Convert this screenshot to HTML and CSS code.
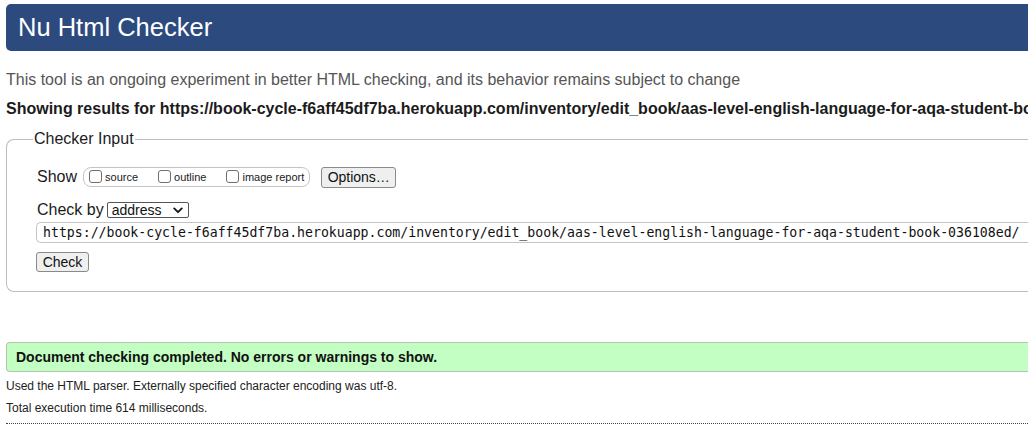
FILE: index.html
```html
<!DOCTYPE html>
<html lang="en">
<head>
<meta charset="utf-8">
<title>Nu Html Checker</title>
<link rel="stylesheet" href="styles.css">
</head>
<body>
<div class="page">
  <h1 class="banner">Nu Html Checker</h1>
  <p class="intro">This tool is an ongoing experiment in better HTML checking, and its behavior remains subject to change</p>
  <p class="showing">Showing results for https://book-cycle-f6aff45df7ba.herokuapp.com/inventory/edit_book/aas-level-english-language-for-aqa-student-book-036108ed/</p>
  <fieldset class="checker">
    <legend class="legend">Checker Input</legend>
    <div class="row show-row">
      <span class="label">Show</span>
      <span class="pill">
        <span class="opt"><span class="box"></span>source</span>
        <span class="opt"><span class="box"></span>outline</span>
        <span class="opt"><span class="box"></span>image report</span>
      </span>
      <span class="btn options">Options…</span>
    </div>
    <div class="row by-row">
      <span class="label">Check by</span>
      <span class="select">address<svg class="chev" width="10" height="7" viewBox="0 0 10 7"><path d="M1.2 1.4 L5 5.2 L8.8 1.4" fill="none" stroke="#111" stroke-width="1.8" stroke-linecap="round" stroke-linejoin="round"/></svg></span>
    </div>
    <div class="url">https://book-cycle-f6aff45df7ba.herokuapp.com/inventory/edit_book/aas-level-english-language-for-aqa-student-book-036108ed/</div>
    <span class="btn check">Check</span>
  </fieldset>
  <div class="success">Document checking completed. No errors or warnings to show.</div>
  <p class="details">Used the HTML parser. Externally specified character encoding was utf-8.</p>
  <p class="details total">Total execution time 614 milliseconds.</p>
  <div class="rule"></div>
</div>
</body>
</html>
```
FILE: styles.css
```css
html, body {
  margin: 0;
  padding: 0;
  overflow: hidden;
  background: #fff;
}
body {
  font-family: "Liberation Sans", Arial, Helvetica, sans-serif;
  color: #1b1b1b;
}
.page {
  width: 1120px;
  padding: 4px 0 0 6px;
}
.banner {
  margin: 0;
  height: 47px;
  line-height: 46px;
  padding-left: 12px;
  background: #2c4a7e;
  color: #fff;
  font-size: 25.5px;
  font-weight: normal;
  border-radius: 5px 0 0 5px;
}
.intro {
  margin: 20px 0 0;
  line-height: 18px;
  font-size: 16px;
  color: #555;
}
.showing {
  margin: 11px 0 0;
  line-height: 18px;
  font-size: 16px;
  font-weight: bold;
  white-space: nowrap;
}
.checker {
  margin: 12px 0 0;
  padding: 18px 0 19px 30px;
  border: 1px solid #bdbdbd;
  border-radius: 8px 0 0 8px;
  border-right: none;
}
.legend {
  font-size: 16px;
  line-height: 18px;
  padding: 0 1px;
  margin-left: -4px;
}
.row {
  display: flex;
  align-items: center;
  font-size: 16px;
}
.show-row {
  height: 22px;
}
.label {
  line-height: 18px;
}
.pill {
  display: flex;
  align-items: center;
  height: 18px;
  margin-left: 6px;
  padding: 0 5px 0 5px;
  border: 1px solid #c4c4c4;
  border-radius: 8px;
  font-size: 11px;
}
.opt {
  display: flex;
  align-items: center;
  margin-right: 20px;
}
.opt:last-child {
  margin-right: 0;
}
.box {
  box-sizing: border-box;
  width: 13px;
  height: 13px;
  border: 1px solid #6f6f6f;
  border-radius: 3px;
  margin-right: 3px;
  background: #fff;
  position: relative;
  top: -1px;
}
.btn {
  display: inline-flex;
  align-items: center;
  justify-content: center;
  background: #efefef;
  border: 1px solid #8a8a8a;
  border-radius: 3px;
  font-size: 14px;
  color: #111;
}
.options {
  margin-left: 11px;
  width: 73px;
  height: 19px;
}
.by-row {
  margin-top: 12px;
  height: 20px;
}
.select {
  display: inline-flex;
  align-items: center;
  justify-content: space-between;
  margin-left: 3px;
  width: 71px;
  height: 14px;
  padding: 0 5px 0 4px;
  border: 1px solid #555;
  border-radius: 2px;
  font-size: 14px;
  color: #111;
}
.url {
  margin-top: 2px;
  margin-left: -1px;
  height: 19px;
  line-height: 19px;
  padding-left: 6px;
  border: 1px solid #c4c4c4;
  border-right: none;
  border-radius: 5px 0 0 5px;
  font-family: "DejaVu Sans Mono", "Liberation Mono", monospace;
  font-size: 13.2px;
  white-space: nowrap;
  color: #111;
}
.check {
  margin-top: 9px;
  margin-left: -1px;
  width: 51px;
  height: 18px;
}
.success {
  margin-top: 50px;
  height: 28px;
  line-height: 28px;
  padding-left: 9px;
  background: #c3ffc3;
  border: 1px solid #b3c6b3;
  border-right: none;
  border-radius: 4px 0 0 4px;
  font-size: 14px;
  font-weight: bold;
  color: #111;
}
.details {
  margin: 7px 0 0;
  font-size: 12px;
  line-height: 15px;
  color: #222;
}
.total {
  margin-top: 7px;
}
.rule {
  margin-top: 7px;
  border-bottom: 1px dotted #444;
}
```
